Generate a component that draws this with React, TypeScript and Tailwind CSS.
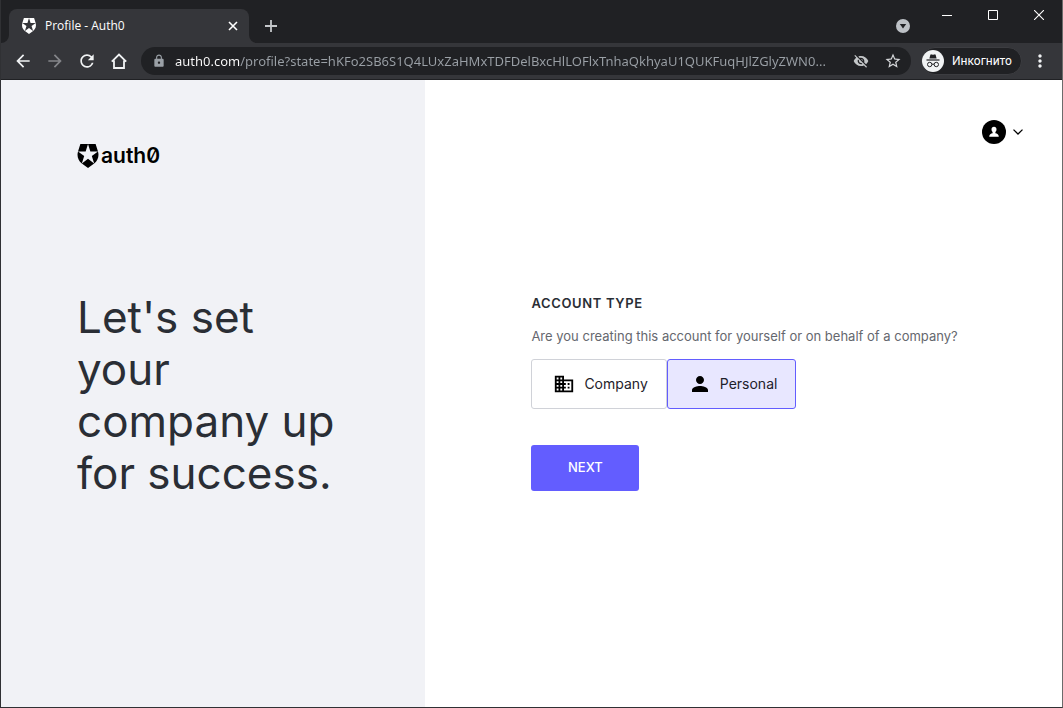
import { useState } from "react";
import {
  MdArrowBack,
  MdArrowForward,
  MdBusiness,
  MdLock,
  MdMoreVert,
  MdPerson,
  MdRefresh,
  MdStarBorder,
  MdVisibilityOff,
} from "react-icons/md";

const SHIELD =
  "M21.98 7.448L19.62 0H4.347L2.02 7.448c-1.352 4.312.03 9.206 3.815 12.015L12.007 24l6.157-4.552c3.755-2.81 5.182-7.688 3.815-12.015l-6.16 4.58 2.343 7.45-6.157-4.597-6.158 4.58 2.358-7.433-6.188-4.55 7.63-.045L12.008 0l2.356 7.404 7.615.044z";

const ADDRESS =
  "auth0.com/profile?state=hKFo2SB6S1Q4LUxZaHMxTDFDelBxcHlLOFlxTnhaQkhyaU1QUKFuqHJlZGlyZWN0...";

function Shield({ className }: { className: string }) {
  return (
    <svg viewBox="1.5 0 21 24" fill="currentColor" aria-hidden="true" className={className}>
      <path d={SHIELD} />
    </svg>
  );
}

function TabStrip() {
  return (
    <div className="flex h-[43px] bg-[#202124]">
      <div className="flex items-end">
        <svg width="8" height="8" viewBox="0 0 8 8" aria-hidden="true">
          <path d="M8 0v8H0a8 8 0 0 0 8-8z" fill="#35363a" />
        </svg>
        <div className="flex h-[34px] w-60 items-center rounded-t-lg bg-[#35363a] pr-2 pl-3 text-white">
          <Shield className="h-4 w-4" />
          <span className="ml-2 flex-1 text-xs">Profile - Auth0</span>
          <button aria-label="Close tab" className="flex size-4 items-center justify-center">
            <svg width="10" height="10" viewBox="0 0 10 10" stroke="currentColor" strokeWidth="1.6">
              <path d="M1 1l8 8M9 1l-8 8" />
            </svg>
          </button>
        </div>
        <svg width="8" height="8" viewBox="0 0 8 8" aria-hidden="true">
          <path d="M0 0v8h8a8 8 0 0 1-8-8z" fill="#35363a" />
        </svg>
      </div>
      <button aria-label="New tab" className="mt-3 flex size-7 items-center justify-center text-[#c4c7ca]">
        <svg width="12" height="12" viewBox="0 0 12 12" stroke="currentColor" strokeWidth="1.8">
          <path d="M6 0v12M0 6h12" />
        </svg>
      </button>
      <div className="flex-1" />
      <button aria-label="Search tabs" className="mt-3 mr-[7px] flex size-7 items-center justify-center">
        <svg width="14" height="14" viewBox="0 0 14 14">
          <circle cx="7" cy="7" r="7" fill="#bdc1c6" />
          <path d="M3.8 5h6.4L7 9.4z" fill="#202124" />
        </svg>
      </button>
      <div className="flex h-[30px] text-white">
        <button aria-label="Minimize" className="flex w-[46px] items-center justify-center">
          <svg width="10" height="10" viewBox="0 0 10 10" stroke="currentColor">
            <path d="M0 5.5h10" />
          </svg>
        </button>
        <button aria-label="Maximize" className="flex w-[46px] items-center justify-center">
          <svg width="10" height="10" viewBox="0 0 10 10" stroke="currentColor" fill="none">
            <path d="M.5.5h9v9h-9z" />
          </svg>
        </button>
        <button aria-label="Close" className="flex w-[46px] items-center justify-center">
          <svg width="10" height="10" viewBox="0 0 10 10" stroke="currentColor" strokeWidth="1.1">
            <path d="M0 0l10 10M10 0L0 10" />
          </svg>
        </button>
      </div>
    </div>
  );
}

function IncognitoIcon() {
  return (
    <svg width="22" height="22" viewBox="0 0 22 22" aria-hidden="true">
      <circle cx="11" cy="11" r="11" fill="#f1f3f4" />
      <path d="M7.4 8.6L8.3 5q.3-.9 1.2-.6l1.500.4 1.500-.4q.9-.3 1.200.6l.9 3.600z" fill="#202124" />
      <path d="M4.500 10h13" stroke="#202124" strokeWidth="1.200" />
      <g fill="none" stroke="#202124" strokeWidth="1">
        <circle cx="7.700" cy="14.500" r="2.200" />
        <circle cx="14.300" cy="14.500" r="2.200" />
        <path d="M9.900 14.400q1.100-.8 2.200 0" />
      </g>
    </svg>
  );
}

function Toolbar() {
  const [address, setAddress] = useState(ADDRESS);
  return (
    <div className="flex h-[37px] items-center border-b border-[#202124] bg-[#35363a] pr-2.5 pl-1.5 text-[#f1f3f4]">
      <div className="flex">
        <button aria-label="Back" className="flex size-8 items-center justify-center">
          <MdArrowBack size={20} />
        </button>
        <button aria-label="Forward" className="flex size-8 items-center justify-center text-[#85868a]">
          <MdArrowForward size={20} />
        </button>
        <button aria-label="Reload" className="flex size-8 items-center justify-center">
          <MdRefresh size={20} />
        </button>
        <button aria-label="Home" className="flex size-8 items-center justify-center">
          <svg width="16" height="16" viewBox="0 0 16 16" fill="none" stroke="currentColor" strokeWidth="1.8">
            <path d="M.8 8.600L8 1.500l7.200 7.100M3 7.500V15h10V7.500" />
          </svg>
        </button>
      </div>
      <div className="ml-1.5 flex h-7 min-w-0 flex-1 items-center rounded-full bg-[#202124] pr-2">
        <MdLock size={14} className="ml-[11px] shrink-0 text-[#9aa0a6]" />
        <input
          aria-label="Address"
          value={address}
          onChange={(e) => setAddress(e.target.value)}
          className="ml-[9px] h-7 min-w-0 flex-1 bg-linear-to-r from-white from-[65px] to-[#9aa0a6] to-[65px] bg-clip-text font-['Noto_Sans',sans-serif] text-[13px] text-transparent outline-none"
        />
        <button aria-label="Third-party cookies blocked" className="ml-2 flex size-5 items-center justify-center text-[#c4c7c9]">
          <MdVisibilityOff size={16} />
        </button>
        <button aria-label="Bookmark this page" className="ml-3 flex size-5 items-center justify-center text-[#d5d7da]">
          <MdStarBorder size={18} />
        </button>
      </div>
      <button className="ml-2.5 flex h-7 w-[101px] items-center gap-2 rounded-full border border-[#3c3d41] bg-[#202124] font-['Roboto',sans-serif] text-xs text-white">
        <IncognitoIcon />
        Инкогнито
      </button>
      <button aria-label="Menu" className="ml-1.5 flex size-6 items-center justify-center">
        <MdMoreVert size={20} />
      </button>
    </div>
  );
}

function AccountMenu() {
  return (
    <button aria-label="Account menu" className="flex h-6 items-center gap-[7px] text-black">
      <svg width="24" height="24" viewBox="0 0 24 24">
        <circle cx="12" cy="12" r="12" />
        <path
          d="M12 6.800c1.600 0 2.500 1.100 2.500 2.600 0 1.100-.5 1.900-1.100 2.500v1.400c1.700.4 3.400.9 3.400 3.500H7.200c0-2.600 1.700-3.100 3.400-3.500v-1.400c-.6-.6-1.100-1.400-1.100-2.500 0-1.500.9-2.600 2.500-2.600z"
          fill="#fff"
        />
      </svg>
      <svg width="10" height="6" viewBox="0 0 10 6" fill="none" stroke="currentColor" strokeWidth="1.300">
        <path d="M.5.600L5 5 9.500.600" />
      </svg>
    </button>
  );
}

const OPTIONS = [
  { id: "company", label: "Company", Icon: MdBusiness, size: 22 },
  { id: "personal", label: "Personal", Icon: MdPerson, size: 24 },
];

function AccountForm() {
  const [type, setType] = useState("personal");
  return (
    <form onSubmit={(e) => e.preventDefault()} className="pb-0.5 pl-[106px]">
      <h2 className="text-[13px] leading-4 font-semibold tracking-wider text-[#2a2e35]">ACCOUNT TYPE</h2>
      <p className="mt-[15px] text-[13px] leading-5 whitespace-nowrap text-[#65676e]">
        Are you creating this account for yourself or on behalf of a company?
      </p>
      <div role="radiogroup" aria-label="Account type" className="mt-[13px] flex">
        {OPTIONS.map(({ id, label, Icon, size }) => (
          <label
            key={id}
            className="flex h-[50px] cursor-pointer items-center gap-2 rounded-[3px] border border-[#d0d2d8] pr-[18px] pl-5 text-sm text-[#1e212a] has-checked:border-[#635dff] has-checked:bg-[#e8e7ff]"
          >
            <input
              type="radio"
              name="account-type"
              value={id}
              checked={type === id}
              onChange={() => setType(id)}
              className="sr-only"
            />
            <span className="flex h-6 w-6 items-center justify-center text-black">
              <Icon size={size} />
            </span>
            {label}
          </label>
        ))}
      </div>
      <button type="submit" className="mt-9 h-[46px] w-[108px] rounded-[3px] bg-[#635dff] text-[13px] font-medium text-white">
        NEXT
      </button>
    </form>
  );
}

export default function App() {
  return (
    <div className="flex min-h-screen flex-col border-x border-b border-r-[#6b6b6b] border-b-[#303134] border-l-[#303134] bg-white font-['Inter',sans-serif]">
      <header className="font-['Open_Sans',sans-serif]">
        <TabStrip />
        <Toolbar />
      </header>
      <main className="grid flex-1 grid-cols-[2fr_3fr]">
        <section className="grid grid-rows-[1fr_auto_1fr] bg-[#f1f2f6] px-[76px]">
          <div className="flex h-6 items-center gap-0.5 py-[76px] text-black">
            <Shield className="h-6 w-[22px]" />
            <span className="text-[21px] leading-6 font-semibold [font-feature-settings:'zero']">auth0</span>
          </div>
          <h1 className="max-w-[272px] pt-0.5 text-[44px] leading-[52px] text-[#2a2e35]">
            Let&apos;s set your company up for success.
          </h1>
        </section>
        <section className="grid grid-rows-[1fr_auto_1fr]">
          <div className="flex items-start justify-end pt-10 pr-[39px]">
            <AccountMenu />
          </div>
          <AccountForm />
        </section>
      </main>
    </div>
  );
}
